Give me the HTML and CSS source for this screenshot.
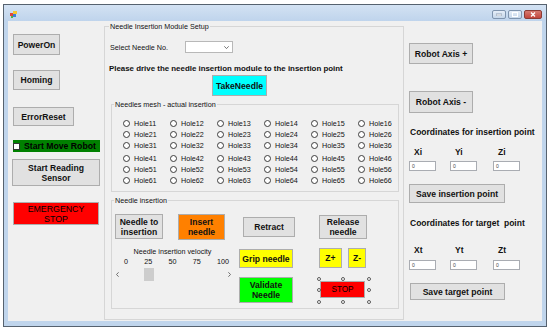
FILE: index.html
```html
<!DOCTYPE html>
<html lang="en">
<head>
    <meta charset="UTF-8">
    <meta name="viewport" content="width=device-width, initial-scale=1.0">
    <title>Needle Insertion Robot</title>
    <link rel="stylesheet" href="styles.css">
</head>
<body>
    <div class="window">
        <!-- title bar -->
        <div class="titlebar">
            <svg class="app-icon" width="7" height="7" viewBox="0 0 7 7">
                <rect x="0" y="2" width="3" height="3" fill="#e0463c"/>
                <rect x="3" y="0" width="4" height="3" fill="#f6c531"/>
                <rect x="3" y="3" width="3" height="3" fill="#3d7fd6"/>
                <rect x="1" y="5" width="2" height="2" fill="#4db54a"/>
            </svg>
            <div class="caption-btns">
                <span class="cap min"><svg width="6" height="3" viewBox="0 0 6 3"><rect x="0" y="1" width="6" height="2" fill="#fff" stroke="#6b7f99" stroke-width="0.6"/></svg></span>
                <span class="cap max"><svg width="6" height="5" viewBox="0 0 6 5"><rect x="0.5" y="0.5" width="5" height="4" fill="none" stroke="#fff" stroke-width="1"/></svg></span>
                <span class="cap close"><svg width="6" height="5" viewBox="0 0 6 5"><path d="M1 0.5 L5 4.5 M5 0.5 L1 4.5" stroke="#fff" stroke-width="1.3"/></svg></span>
            </div>
        </div>

        <div class="client">
            <!-- left column -->
            <div class="side">
                <div class="btn power">PowerOn</div>
                <div class="btn homing">Homing</div>
                <div class="btn reset">ErrorReset</div>
                <div class="move"><span class="check"></span>Start Move Robot</div>
                <div class="btn sensor">Start Reading<br>Sensor</div>
                <div class="btn estop">EMERGENCY<br>STOP</div>
            </div>

            <!-- needle module group -->
            <div class="group setup">
                <div class="group-title">Needle Insertion Module Setup</div>
                <div class="needle-row">
                    <label>Select Needle No.</label>
                    <div class="select">
                        <svg width="5" height="3" viewBox="0 0 5 3"><path d="M0.3 0.3 L2.5 2.6 L4.7 0.3" fill="none" stroke="#555" stroke-width="0.8"/></svg>
                    </div>
                </div>
                <div class="hint">Please drive the needle insertion module to the insertion point</div>
                <div class="btn take">TakeNeedle</div>

                <div class="group mesh">
                    <div class="group-title">Needles mesh - actual insertion</div>
                    <div class="holes first">
                        <div class="hole"><span class="radio"></span>Hole11</div>
                        <div class="hole"><span class="radio"></span>Hole12</div>
                        <div class="hole"><span class="radio"></span>Hole13</div>
                        <div class="hole"><span class="radio"></span>Hole14</div>
                        <div class="hole"><span class="radio"></span>Hole15</div>
                        <div class="hole"><span class="radio"></span>Hole16</div>
                        <div class="hole"><span class="radio"></span>Hole21</div>
                        <div class="hole"><span class="radio"></span>Hole22</div>
                        <div class="hole"><span class="radio"></span>Hole23</div>
                        <div class="hole"><span class="radio"></span>Hole24</div>
                        <div class="hole"><span class="radio"></span>Hole25</div>
                        <div class="hole"><span class="radio"></span>Hole26</div>
                        <div class="hole"><span class="radio"></span>Hole31</div>
                        <div class="hole"><span class="radio"></span>Hole32</div>
                        <div class="hole"><span class="radio"></span>Hole33</div>
                        <div class="hole"><span class="radio"></span>Hole34</div>
                        <div class="hole"><span class="radio"></span>Hole35</div>
                        <div class="hole"><span class="radio"></span>Hole36</div>
                    </div>
                    <div class="holes second">
                        <div class="hole"><span class="radio"></span>Hole41</div>
                        <div class="hole"><span class="radio"></span>Hole42</div>
                        <div class="hole"><span class="radio"></span>Hole43</div>
                        <div class="hole"><span class="radio"></span>Hole44</div>
                        <div class="hole"><span class="radio"></span>Hole45</div>
                        <div class="hole"><span class="radio"></span>Hole46</div>
                        <div class="hole"><span class="radio"></span>Hole51</div>
                        <div class="hole"><span class="radio"></span>Hole52</div>
                        <div class="hole"><span class="radio"></span>Hole53</div>
                        <div class="hole"><span class="radio"></span>Hole54</div>
                        <div class="hole"><span class="radio"></span>Hole55</div>
                        <div class="hole"><span class="radio"></span>Hole56</div>
                        <div class="hole"><span class="radio"></span>Hole61</div>
                        <div class="hole"><span class="radio"></span>Hole62</div>
                        <div class="hole"><span class="radio"></span>Hole63</div>
                        <div class="hole"><span class="radio"></span>Hole64</div>
                        <div class="hole"><span class="radio"></span>Hole65</div>
                        <div class="hole"><span class="radio"></span>Hole66</div>
                    </div>
                </div>

                <div class="group insertion">
                    <div class="group-title">Needle insertion</div>
                    <div class="ins-row">
                        <div class="btn to-ins">Needle to<br>insertion</div>
                        <div class="btn insert">Insert<br>needle</div>
                        <div class="btn retract">Retract</div>
                        <div class="btn release">Release<br>needle</div>
                    </div>
                    <div class="ins-row2">
                        <div class="velocity">
                            <div class="vel-label">Needle insertion velocity</div>
                            <div class="vel-scale"><span>0</span><span>25</span><span>50</span><span>75</span><span>100</span></div>
                            <div class="scroll">
                                <svg class="arrow" width="3" height="5" viewBox="0 0 3 5"><path d="M2.6 0.3 L0.5 2.5 L2.6 4.7" fill="none" stroke="#606060" stroke-width="0.9"/></svg>
                                <span class="thumb"></span>
                                <svg class="arrow right" width="3" height="5" viewBox="0 0 3 5"><path d="M0.4 0.3 L2.5 2.5 L0.4 4.7" fill="none" stroke="#606060" stroke-width="0.9"/></svg>
                            </div>
                        </div>
                        <div class="mid-col">
                            <div class="btn grip">Grip needle</div>
                            <div class="btn validate">Validate<br>Needle</div>
                        </div>
                        <div class="z-col">
                            <div class="z-row">
                                <div class="btn zplus">Z+</div>
                                <div class="btn zminus">Z-</div>
                            </div>
                            <div class="btn stop">
                                STOP
                                <span class="handle h1"></span><span class="handle h2"></span><span class="handle h3"></span>
                                <span class="handle h4"></span><span class="handle h5"></span>
                                <span class="handle h6"></span><span class="handle h7"></span><span class="handle h8"></span>
                            </div>
                        </div>
                    </div>
                </div>
            </div>

            <!-- robot axis column -->
            <div class="axis">
                <div class="btn axis-plus">Robot Axis +</div>
                <div class="btn axis-minus">Robot Axis -</div>
                <div class="coord-title first-title">Coordinates for insertion point</div>
                <div class="coord-grid labels-a">
                    <span>Xi</span><span>Yi</span><span>Zi</span>
                </div>
                <div class="coord-grid inputs-a">
                    <span class="field">0</span><span class="field">0</span><span class="field">0</span>
                </div>
                <div class="btn save-ins">Save insertion point</div>
                <div class="coord-title second-title">Coordinates for target&nbsp; point</div>
                <div class="coord-grid labels-b">
                    <span>Xt</span><span>Yt</span><span>Zt</span>
                </div>
                <div class="coord-grid inputs-b">
                    <span class="field">0</span><span class="field">0</span><span class="field">0</span>
                </div>
                <div class="btn save-target">Save target point</div>
            </div>
        </div>
    </div>
</body>
</html>
```

FILE: styles.css
```css
* {
    box-sizing: border-box;
}
body {
    margin: 0;
    background: #fff;
    font-family: "Liberation Sans", Arial, sans-serif;
    color: #111;
}
.window {
    margin: 4px 0 0 3px;
    width: 544px;
    height: 323px;
    border: 1px solid #56626f;
    background: #c0d5ec;
    display: flex;
    flex-direction: column;
}
.titlebar {
    height: 16px;
    display: flex;
    align-items: flex-start;
    justify-content: space-between;
    padding: 6px 4px 0 6px;
    background: linear-gradient(#d3e2f3, #bfd4ec);
}
.app-icon {
    display: block;
}
.caption-btns {
    display: flex;
    gap: 2px;
    margin-top: -1px;
}
.cap {
    height: 9px;
    width: 14px;
    border: 1px solid #7f94ae;
    border-radius: 2px;
    display: flex;
    align-items: center;
    justify-content: center;
    background: linear-gradient(#e6eef8, #c6d7ea);
}
.cap.close {
    width: 18px;
    background: linear-gradient(#d67a70, #c2453c);
    border-color: #8b3b35;
}
.client {
    height: 300px;
    margin: 0 4px 5px;
    background: #f0f0f0;
    display: flex;
    align-items: flex-start;
    font-size: 7.2px;
}

/* buttons */
.btn {
    display: flex;
    align-items: center;
    justify-content: center;
    text-align: center;
    background: #e1e1e1;
    border: 1px solid #adadad;
    font-weight: bold;
    font-size: 8.6px;
    line-height: 10px;
    color: #111;
}

/* left column */
.side {
    width: 92px;
    padding-left: 5px;
    display: flex;
    flex-direction: column;
    align-items: flex-start;
}
.power {
    margin-top: 13px;
    width: 47px;
    height: 21px;
}
.homing {
    margin-top: 15px;
    width: 47px;
    height: 20px;
}
.reset {
    margin-top: 17px;
    width: 61px;
    height: 19px;
}
.move {
    margin-top: 14px;
    width: 87px;
    height: 12px;
    background: #008000;
    display: flex;
    align-items: center;
    font-weight: bold;
    font-size: 8.7px;
    color: #000;
}
.check {
    width: 7px;
    height: 7px;
    background: #fff;
    border: 1px solid #333;
    margin-right: 4px;
}
.sensor {
    margin: 7px 0 0 -1px;
    width: 88px;
    height: 27px;
}
.estop {
    margin-top: 16px;
    width: 86px;
    height: 23px;
    background: #ff0000;
    font-weight: normal;
    font-size: 8.8px;
    color: #000;
}

/* group boxes */
.group {
    border: 1px solid #d6d6d6;
}
.group-title {
    display: table;
    margin: -5px 0 0 4px;
    padding: 0 1px;
    background: #f0f0f0;
    line-height: 9px;
}
.setup {
    margin: 5px 0 0 4px;
    width: 300px;
    height: 294px;
}
.needle-row {
    display: flex;
    align-items: center;
    margin: 10px 0 0 5px;
}
.needle-row label {
    width: 75px;
}
.select {
    width: 48px;
    height: 12px;
    background: #fff;
    border: 1px solid #b8b8b8;
    display: flex;
    align-items: center;
    justify-content: flex-end;
    padding-right: 3px;
}
.hint {
    margin: 11px 0 0 4px;
    font-weight: bold;
    font-size: 7.9px;
    line-height: 10px;
    white-space: nowrap;
}
.take {
    margin: 1px 0 0 107px;
    width: 55px;
    height: 21px;
    background: #00ffff;
}
.mesh {
    margin: 8px 0 0 6px;
    width: 288px;
    height: 88px;
}
.mesh .group-title,
.insertion .group-title {
    margin-left: 2px;
}
.holes {
    display: grid;
    grid-template-columns: repeat(6, 47px);
    grid-auto-rows: 11.3px;
    margin-left: 11px;
}
.holes.first {
    margin-top: 8.4px;
}
.holes.second {
    margin-top: 1.2px;
}
.hole {
    display: flex;
    align-items: center;
    gap: 4px;
}
.radio {
    width: 7px;
    height: 7px;
    border: 1px solid #3c3c3c;
    border-radius: 50%;
    background: #fff;
}
.insertion {
    margin: 8px 0 0 6px;
    width: 288px;
    height: 109px;
}
.ins-row {
    display: flex;
    align-items: flex-start;
    margin: 9px 0 0 3px;
}
.to-ins {
    width: 48px;
    height: 25px;
}
.insert {
    margin-left: 15px;
    width: 47px;
    height: 26px;
    background: #ff8000;
}
.retract {
    margin: 3px 0 0 18px;
    width: 52px;
    height: 20px;
}
.release {
    margin: 1px 0 0 24px;
    width: 48px;
    height: 24px;
}
.ins-row2 {
    display: flex;
    align-items: flex-start;
    margin-left: 2px;
}
.velocity {
    width: 117px;
}
.vel-label {
    margin-top: 7px;
    line-height: 9px;
    text-align: center;
}
.vel-scale {
    margin-top: 1px;
    line-height: 9px;
    display: flex;
    justify-content: space-between;
    padding: 0 2px 0 10px;
}
.scroll {
    margin-top: 1px;
    height: 14px;
    display: flex;
    align-items: center;
    padding-left: 2px;
}
.thumb {
    margin-left: 25px;
    width: 10px;
    height: 13px;
    background: #cdcdcd;
}
.arrow.right {
    margin-left: auto;
}
.mid-col {
    margin-left: 8px;
    display: flex;
    flex-direction: column;
}
.grip {
    margin-top: 9px;
    width: 54px;
    height: 19px;
    background: #ffff00;
}
.validate {
    margin-top: 9px;
    width: 54px;
    height: 26px;
    background: #00ff00;
}
.z-col {
    margin-left: 26px;
    display: flex;
    flex-direction: column;
    align-items: flex-start;
}
.z-row {
    margin-top: 8px;
    display: flex;
}
.zplus {
    width: 23px;
    height: 20px;
    background: #ffff00;
}
.zminus {
    margin-left: 6px;
    width: 18px;
    height: 20px;
    background: #ffff00;
}
.stop {
    position: relative;
    margin: 13px 0 0 1px;
    width: 45px;
    height: 17px;
    background: #ff0000;
    font-weight: normal;
    font-size: 8.2px;
    color: #000;
}
.handle {
    position: absolute;
    width: 4px;
    height: 4px;
    border: 1px solid #5a5a5a;
    border-radius: 50%;
    background: #fff;
}
.h1 { left: -4px; top: -5px; }
.h2 { left: 20px; top: -5px; }
.h3 { left: 46px; top: -5px; }
.h4 { left: -4px; top: 6px; }
.h5 { left: 46px; top: 6px; }
.h6 { left: -4px; top: 18px; }
.h7 { left: 20px; top: 18px; }
.h8 { left: 46px; top: 18px; }

/* right column */
.axis {
    margin-left: 5px;
    display: flex;
    flex-direction: column;
    align-items: flex-start;
}
.axis-plus {
    margin-top: 22px;
    width: 64px;
    height: 21px;
}
.axis-minus {
    margin-top: 27px;
    width: 64px;
    height: 22px;
}
.coord-title {
    margin-left: 1px;
    font-weight: bold;
    font-size: 8.5px;
    line-height: 11px;
    white-space: nowrap;
}
.first-title {
    margin-top: 13.5px;
}
.second-title {
    margin-top: 14.5px;
}
.coord-grid {
    display: grid;
    grid-template-columns: 41px 43px 27px;
}
.labels-a,
.labels-b {
    font-weight: bold;
    font-size: 8.5px;
    line-height: 11px;
}
.labels-a span,
.labels-b span {
    padding-left: 5px;
}
.labels-a {
    margin-top: 9px;
}
.labels-b {
    margin-top: 16px;
}
.inputs-a {
    margin-top: 3.5px;
}
.inputs-b {
    margin-top: 4.5px;
}
.field {
    width: 27px;
    height: 10px;
    background: #fff;
    border: 1px solid #a9acb2;
    font-size: 5px;
    line-height: 8px;
    padding-left: 2px;
    color: #444;
}
.save-ins {
    margin-top: 13px;
    width: 96px;
    height: 19px;
}
.save-target {
    margin: 13px 0 0 1px;
    width: 95px;
    height: 17px;
}
```
